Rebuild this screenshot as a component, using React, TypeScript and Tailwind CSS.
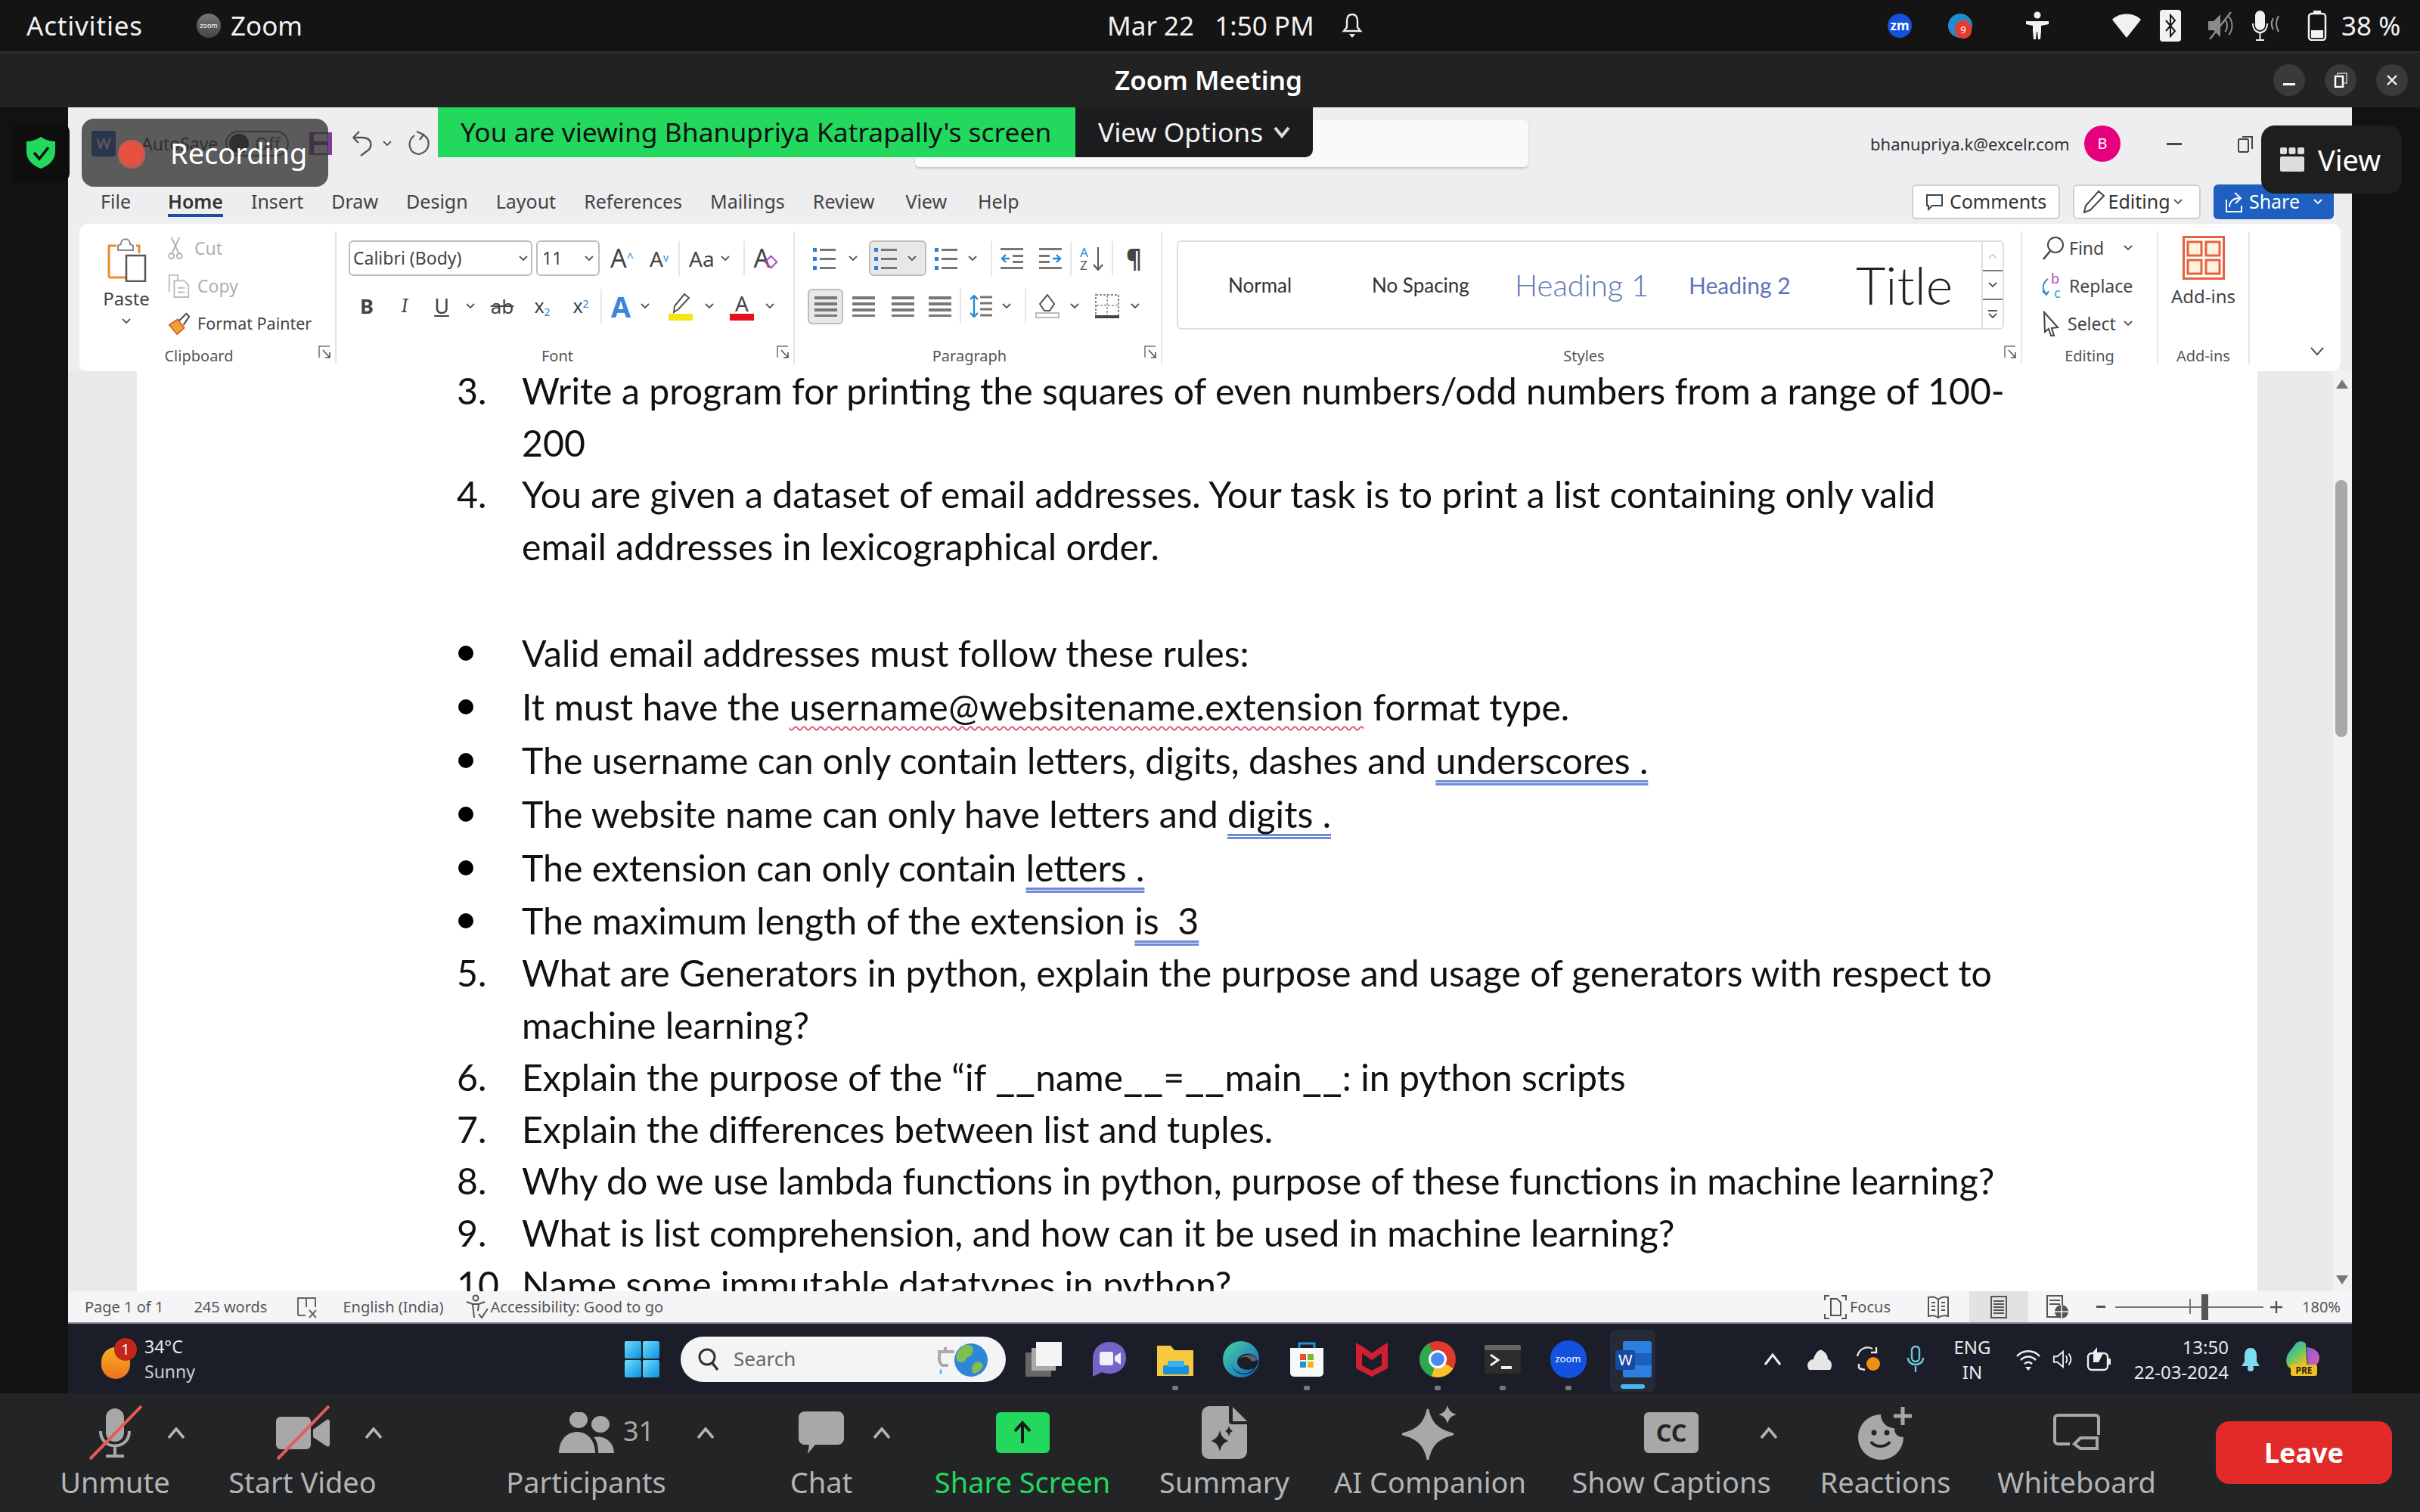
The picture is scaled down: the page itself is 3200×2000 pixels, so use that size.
import type { ReactNode } from "react";

const Chev = ({ color = "#555" }: { color?: string }) => (
  <svg width="12" height="8" viewBox="0 0 12 8" className="shrink-0">
    <path d="M1 1l5 5 5-5" stroke={color} strokeWidth="1.8" fill="none" />
  </svg>
);

const UpChev = () => (
  <svg width="24" height="15" viewBox="0 0 24 15">
    <path d="M2 14L12 2l10 12" stroke="#b5b5b5" strokeWidth="3.6" fill="none" />
  </svg>
);

const Launcher = () => (
  <svg width="17" height="20" viewBox="0 0 17 20" className="absolute right-[5px] bottom-[6px]">
    <path d="M1 17V2h14" stroke="#777" strokeWidth="1.6" fill="none" />
    <path d="M6 7l9 10M9 17h6v-7" stroke="#555" strokeWidth="1.6" fill="none" />
  </svg>
);

const Sep = () => <div className="w-[2px] h-[46px] bg-[#e6e6e6] shrink-0" />;

const Lines = () => (
  <svg width="30" height="28" viewBox="0 0 30 28" className="block">
    <rect y="1" width="30" height="4" fill="#777" />
    <rect y="9" width="30" height="4" fill="#777" />
    <rect y="17" width="30" height="4" fill="#777" />
    <rect y="25" width="30" height="3" fill="#777" />
  </svg>
);

const ListIcon = ({ marks }: { marks: string }) => (
  <svg width="32" height="30" viewBox="0 0 32 30" className="block shrink-0">
    <rect x="0" y="1" width="5" height="5" fill={marks} />
    <rect x="0" y="13" width="5" height="5" fill={marks} />
    <rect x="0" y="25" width="5" height="5" fill={marks} />
    <rect x="9" y="2" width="21" height="3" fill="#777" />
    <rect x="9" y="14" width="21" height="3" fill="#777" />
    <rect x="9" y="26" width="21" height="3" fill="#777" />
  </svg>
);

const IndentIcon = ({ flip }: { flip?: boolean }) => (
  <svg width="30" height="28" viewBox="0 0 30 28" className="block" style={flip ? { transform: "scaleX(-1)" } : undefined}>
    <rect width="30" height="3" y="0" fill="#777" />
    <rect width="30" height="3" y="25" fill="#777" />
    <rect x="16" width="14" height="3" y="9" fill="#777" />
    <rect x="16" width="14" height="3" y="17" fill="#777" />
    <path d="M12 14H2m5-5l-5 5 5 5" stroke="#2a8ad4" strokeWidth="2.4" fill="none" />
  </svg>
);

const Tray = ({ children, className }: { children: ReactNode; className: string }) => (
  <div className={`flex items-center justify-center shrink-0 ${className}`}>{children}</div>
);

const TopBar = () => (
  <div className="h-[70px] shrink-0 bg-[#141414] border-b-2 border-[#303030] flex items-center text-[#f2f2f2] text-[35px] relative">
    <span className="ml-[35px] w-[225px] tracking-[0.8px]">Activities</span>
    <div className="w-[32px] h-[32px] rounded-full bg-gradient-to-b from-[#777] to-[#444] flex items-center justify-center text-[9px] text-white">zoom</div>
    <span className="ml-[13px] w-[93px]">Zoom</span>
    <span className="ml-[1066px] w-[309px] whitespace-pre">Mar 22   1:50 PM</span>
    <svg width="30" height="34" viewBox="0 0 30 34">
      <path d="M15 2c-5 0-7 4-7 9v8l-4 5h22l-4-5v-8c0-5-2-9-7-9z" stroke="#eee" strokeWidth="2.4" fill="none" />
      <path d="M11 28h8l-4 5z" fill="#eee" />
    </svg>
    <div className="ml-[693px] w-[32px] h-[32px] rounded-full bg-[#1352e0] flex items-center justify-center text-[17px] font-bold text-white">zm</div>
    <div className="ml-[48px] w-[32px] h-[32px] rounded-full bg-[#1c8ed0] relative">
      <div className="absolute left-[9px] top-[9px] w-[22px] h-[24px] rounded-[10px] bg-[#e63c30] text-[13px] leading-[24px] text-center text-white">9</div>
    </div>
    <svg className="ml-[70px]" width="32" height="38" viewBox="0 0 32 38">
      <circle cx="16" cy="5" r="4.5" fill="#f2f2f2" />
      <path d="M1 13h30v4l-10 2v7l-1 11h-3l-1-10h-1l-1 10h-3l-1-11v-7L1 17z" fill="#f2f2f2" />
    </svg>
    <svg className="ml-[82px]" width="40" height="32" viewBox="0 0 40 32">
      <path d="M1 8C10-2 30-2 39 8L20 32z" fill="#f2f2f2" />
    </svg>
    <div className="ml-[24px] w-[28px] h-[42px] rounded-[4px] bg-[#f2f2f2] flex items-center justify-center">
      <svg width="16" height="32" viewBox="0 0 16 32">
        <path d="M2 9l12 14-6 7V2l6 7L2 23" stroke="#141414" strokeWidth="2" fill="none" />
      </svg>
    </div>
    <svg className="ml-[34px]" width="36" height="36" viewBox="0 0 36 36">
      <path d="M2 12h7l9-9v30l-9-9H2z" fill="#8a8a8a" />
      <path d="M24 10c4 4 4 12 0 16M29 6c6 6 6 18 0 24" stroke="#8a8a8a" strokeWidth="2" fill="none" />
      <path d="M4 36L32 0" stroke="#8a8a8a" strokeWidth="2.5" />
    </svg>
    <svg className="ml-[23px]" width="44" height="40" viewBox="0 0 44 40">
      <rect x="6" y="1" width="11" height="24" rx="5.5" stroke="#f2f2f2" strokeWidth="2" fill="#f2f2f2" />
      <path d="M2 17c0 16 19 16 19 0M11.5 29v9M6 39h11" stroke="#f2f2f2" strokeWidth="2" fill="none" />
      <path d="M29 10c-3 5-3 10 0 15M36 7c-4 7-4 14 0 21" stroke="#999" strokeWidth="2" fill="none" />
    </svg>
    <svg className="ml-[30px]" width="26" height="40" viewBox="0 0 26 40">
      <rect x="8" y="0" width="10" height="4" fill="#f2f2f2" />
      <rect x="2" y="4" width="22" height="35" rx="4" stroke="#f2f2f2" strokeWidth="2.5" fill="none" />
      <rect x="5" y="26" width="16" height="10" fill="#f2f2f2" />
    </svg>
    <span className="ml-[19px]">38 %</span>
  </div>
);

const TitleBar = () => (
  <div className="h-[72px] shrink-0 bg-[#222222] relative flex items-center justify-end pr-[16px] gap-[26px]">
    <span className="absolute left-[1474px] text-[35px] font-semibold text-white">Zoom Meeting</span>
    <Tray className="w-[42px] h-[42px] rounded-full bg-[#3a3a3a]">
      <div className="w-[16px] h-[3px] bg-white mt-[10px]" />
    </Tray>
    <Tray className="w-[42px] h-[42px] rounded-full bg-[#3a3a3a]">
      <svg width="18" height="20" viewBox="0 0 18 20">
        <path d="M5 3V1h12v13h-3" stroke="#ccc" strokeWidth="1.5" fill="none" />
        <rect x="2" y="5" width="10" height="14" stroke="#fff" strokeWidth="2.5" fill="none" />
      </svg>
    </Tray>
    <Tray className="w-[42px] h-[42px] rounded-full bg-[#3a3a3a]">
      <svg width="16" height="16" viewBox="0 0 16 16">
        <path d="M2 2l12 12M14 2L2 14" stroke="#fff" strokeWidth="2.2" />
      </svg>
    </Tray>
  </div>
);

const tabs = ["Insert", "Draw", "Design", "Layout", "References", "Mailings", "Review"];

const WordHeader = () => (
  <div className="h-[154px] shrink-0 bg-[#eeeef0] flex flex-col text-[#444]">
    <div className="h-[96px] flex items-center pl-[31px] whitespace-nowrap">
      <div className="w-[32px] h-[34px] bg-[#1b4fa8] text-white text-[20px] text-center leading-[34px] rounded-[3px]">W</div>
      <span className="ml-[34px] w-[97px] text-[23px] text-[#333]">AutoSave</span>
      <div className="ml-[14px] w-[84px] h-[34px] rounded-full border-2 border-[#555] flex items-center pl-[3px] text-[23px] text-[#555]">
        <div className="w-[26px] h-[26px] rounded-full bg-[#333] mr-[8px]" />
        Off
      </div>
      <svg className="ml-[26px]" width="32" height="32" viewBox="0 0 32 32">
        <rect x="1" y="1" width="30" height="30" fill="#7b3f98" />
        <rect x="7" y="3" width="18" height="10" fill="#eee" />
        <rect x="7" y="18" width="18" height="11" fill="#eee" />
      </svg>
      <svg className="ml-[23px]" width="32" height="34" viewBox="0 0 32 34">
        <path d="M4 9h12c14 0 14 14 6 18l-8 6M4 9l8-8M4 9l7 7" stroke="#555" strokeWidth="2.4" fill="none" />
      </svg>
      <div className="ml-[11px]">
        <Chev />
      </div>
      <svg className="ml-[19px]" width="33" height="34" viewBox="0 0 33 34">
        <path d="M22 5c11 5 11 22-5 26C4 30 0 15 11 6M14 1l9 4-5 7" stroke="#555" strokeWidth="2.2" fill="none" />
      </svg>
      <div className="ml-[640px] w-[811px] h-[62px] bg-[#fafafa] rounded-[6px] shadow-[0_2px_3px_#c4c4c4]" />
      <span className="ml-[452px] w-[265px] text-[22px] text-[#333]">bhanupriya.k@excelr.com</span>
      <div className="ml-[18px] w-[48px] h-[48px] rounded-full bg-[#e6007e] text-white text-[20px] flex items-center justify-center">B</div>
      <div className="ml-[61px] w-[20px] h-[3px] bg-[#444]" />
      <svg className="ml-[73px]" width="22" height="24" viewBox="0 0 22 24">
        <path d="M7 3h13v16" stroke="#444" strokeWidth="2" fill="none" />
        <rect x="2" y="6" width="13" height="17" rx="2" stroke="#444" strokeWidth="2" fill="none" />
      </svg>
    </div>
    <div className="h-[58px] flex items-center pl-[43px] gap-[37px] text-[25px] pr-[24px]">
      <span className="mr-[12px]">File</span>
      <span className="relative font-semibold text-[#333]">
        Home
        <span className="absolute left-0 right-0 top-[35px] h-[4px] bg-[#1a4fa8]" />
      </span>
      {tabs.map((t) => (
        <span key={t}>{t}</span>
      ))}
      <span className="ml-[4px]">View</span>
      <span className="ml-[4px]">Help</span>
      <div className="ml-auto flex items-center gap-[17px] text-[#333]">
        <div className="w-[196px] h-[46px] bg-white rounded-[6px] border-2 border-[#cfcfcf] flex items-center justify-center gap-[8px]">
          <svg width="24" height="24" viewBox="0 0 24 24">
            <path d="M2 3h20v14H9l-5 5v-5H2z" stroke="#444" strokeWidth="2" fill="none" />
          </svg>
          Comments
        </div>
        <div className="w-[169px] h-[46px] bg-white rounded-[6px] border-2 border-[#cfcfcf] flex items-center justify-center gap-[4px] pr-[12px]">
          <svg width="30" height="32" viewBox="0 0 30 32">
            <path d="M3 30l2-9L22 2l7 6-18 19z" stroke="#444" strokeWidth="2" fill="none" />
          </svg>
          Editing
          <Chev />
        </div>
        <div className="w-[159px] h-[46px] bg-[#1e5fbf] rounded-[6px] text-white flex items-center justify-center gap-[8px]">
          <svg width="24" height="30" viewBox="0 0 24 30">
            <path d="M2 12v16h20v-8M6 22c0-8 6-12 13-12M13 3l8 7-7 7" stroke="#fff" strokeWidth="2" fill="none" />
          </svg>
          Share
          <span className="ml-[10px]">
            <Chev color="#fff" />
          </span>
        </div>
      </div>
    </div>
  </div>
);

const Group = ({ label, className, labelClass = "", launcher = true, children }: { label: string; className: string; labelClass?: string; launcher?: boolean; children: ReactNode }) => (
  <div className={`relative shrink-0 h-[176px] flex flex-col border-r-2 border-[#e6e6e6] ${className}`}>
    <div className="flex-1 min-h-0">{children}</div>
    <div className={`h-[22px] text-[20px] leading-[22px] text-center text-[#555] ${labelClass}`}>{label}</div>
    {launcher && <Launcher />}
  </div>
);

const Clipboard = () => (
  <Group label="Clipboard" className="w-[340px]" labelClass="pr-[22px]">
    <div className="flex pl-[27px]">
      <div className="w-[70px] mt-[7px] flex flex-col items-center">
        <svg width="54" height="60" viewBox="0 0 54 60">
          <path d="M4 54V12h10M40 12h4v10" stroke="#ea8c2c" strokeWidth="3" fill="none" />
          <path d="M16 12l4-2c0-9 12-9 12 0l4 2v6H16z" stroke="#888" strokeWidth="2" fill="#fff" />
          <path d="M4 54h22" stroke="#ea8c2c" strokeWidth="3" />
          <rect x="27" y="25" width="25" height="34" stroke="#555" strokeWidth="2.5" fill="#fff" />
        </svg>
        <span className="text-[24px] mt-[6px] leading-[32px] text-[#444]">Paste</span>
        <div className="mt-[10px]">
          <Chev />
        </div>
      </div>
      <div className="ml-[19px] -mt-[3px] flex flex-col text-[23px]">
        <div className="h-[50px] flex items-center gap-[14px] text-[#b0b0b0]">
          <svg width="22" height="30" viewBox="0 0 22 34">
            <path d="M5 1l11 24M17 1L6 25" stroke="#aaa" strokeWidth="2" fill="none" />
            <circle cx="5" cy="29" r="4" stroke="#aaa" strokeWidth="2" fill="none" />
            <circle cx="17" cy="29" r="4" stroke="#aaa" strokeWidth="2" fill="none" />
          </svg>
          Cut
        </div>
        <div className="h-[50px] flex items-center gap-[8px] text-[#b0b0b0]">
          <svg width="32" height="32" viewBox="0 0 32 34">
            <path d="M2 26V2h12v8" stroke="#bbb" strokeWidth="2" fill="none" />
            <path d="M9 10h14l6 6v17H9z" stroke="#bbb" strokeWidth="2" fill="none" />
            <path d="M14 20h10M14 26h10" stroke="#bbb" strokeWidth="2" />
          </svg>
          Copy
        </div>
        <div className="h-[50px] flex items-center gap-[8px] text-[#444] text-[21.5px] whitespace-nowrap">
          <svg width="32" height="30" viewBox="0 0 32 32">
            <path d="M2 18l12-8 9 12-10 9z" fill="#f0a33a" stroke="#d9622a" strokeWidth="2" />
            <path d="M16 12l10-10 4 4-8 12" fill="#fff" stroke="#444" strokeWidth="2" />
          </svg>
          Format Painter
        </div>
      </div>
    </div>
  </Group>
);

const FontGroup = () => (
  <Group label="Font" className="w-[606px]" labelClass="pr-[20px]">
    <div className="pl-[16px] pt-[12px] h-[59px] flex items-center text-[#444]">
      <div className="w-[243px] h-[47px] border-2 border-[#bdbdbd] rounded-[6px] flex items-center justify-between px-[4px] text-[23px]">
        Calibri (Body)
        <Chev />
      </div>
      <div className="ml-[5px] w-[84px] h-[47px] border-2 border-[#bdbdbd] rounded-[6px] flex items-center justify-between px-[6px] text-[23px]">
        11
        <Chev />
      </div>
      <span className="ml-[14px] w-[52px] text-[34px]">
        A<sup className="text-[16px] text-[#2a8ad4]">^</sup>
      </span>
      <span className="w-[38px] text-[28px]">
        A<sup className="text-[14px] text-[#2a8ad4]">v</sup>
      </span>
      <Sep />
      <span className="ml-[12px] text-[28px]">Aa</span>
      <span className="ml-[8px]">
        <Chev />
      </span>
      <div className="ml-[18px] w-[2px] h-[46px] bg-[#e6e6e6]" />
      <span className="ml-[12px] relative text-[34px]">
        A
        <span className="absolute left-[16px] top-[24px] w-[13px] h-[13px] rotate-45 border-2 border-[#b04ac0]" />
      </span>
    </div>
    <div className="pl-[15px] pt-[17px] flex items-center h-[63px] text-[#444] text-center">
      <span className="w-[50px] text-[27px] font-bold">B</span>
      <span className="w-[50px] text-[27px] italic font-serif">I</span>
      <span className="w-[48px] text-[27px] underline">U</span>
      <span className="w-[28px] flex justify-center">
        <Chev />
      </span>
      <span className="w-[56px] text-[26px] line-through">ab</span>
      <span className="w-[50px] text-[25px]">
        x<sub className="text-[14px] text-[#2a8ad4]">2</sub>
      </span>
      <span className="w-[52px] text-[25px]">
        x<sup className="text-[14px] text-[#2a8ad4]">2</sup>
      </span>
      <Sep />
      <span className="w-[50px] text-[38px] font-bold text-[#3d86d8]">A</span>
      <span className="w-[14px] flex justify-center">
        <Chev />
      </span>
      <div className="ml-[18px] w-[44px] flex flex-col items-center">
        <svg width="26" height="28" viewBox="0 0 26 28">
          <path d="M4 26l1-8L18 2l6 5-14 15z" stroke="#555" strokeWidth="2" fill="none" />
        </svg>
        <div className="w-[32px] h-[9px] bg-[#f4e414]" />
      </div>
      <span className="w-[32px] flex justify-center">
        <Chev />
      </span>
      <div className="ml-[6px] w-[42px] flex flex-col items-center">
        <span className="text-[28px] leading-[28px]">A</span>
        <div className="w-[32px] h-[9px] bg-[#e8101c]" />
      </div>
      <span className="w-[32px] flex justify-center">
        <Chev />
      </span>
    </div>
  </Group>
);

const ParagraphGroup = () => (
  <Group label="Paragraph" className="w-[486px]" labelClass="pr-[22px]">
    <div className="pl-[24px] pt-[12px] h-[59px] flex items-center">
      <ListIcon marks="#2a7fd4" />
      <span className="ml-[15px]">
        <Chev />
      </span>
      <div className="ml-[15px] w-[76px] h-[47px] border-2 border-[#bdbdbd] rounded-[6px] bg-[#e8e8e8] flex items-center pl-[5px] gap-[12px]">
        <ListIcon marks="#2a7fd4" />
        <Chev />
      </div>
      <span className="ml-[11px]">
        <ListIcon marks="#2a7fd4" />
      </span>
      <span className="ml-[12px]">
        <Chev />
      </span>
      <div className="ml-[18px]">
        <Sep />
      </div>
      <span className="ml-[11px]">
        <IndentIcon />
      </span>
      <span className="ml-[21px]">
        <IndentIcon flip />
      </span>
      <div className="ml-[11px]">
        <Sep />
      </div>
      <svg className="ml-[10px]" width="34" height="34" viewBox="0 0 34 34">
        <text x="1" y="15" fontSize="17" fill="#2a8ad4" fontFamily="Noto Sans">A</text>
        <text x="1" y="32" fontSize="17" fill="#555" fontFamily="Noto Sans">Z</text>
        <path d="M25 2v30m-6-7l6 7 6-7" stroke="#555" strokeWidth="2" fill="none" />
      </svg>
      <div className="ml-[9px]">
        <Sep />
      </div>
      <span className="ml-[17px] text-[32px] font-bold text-[#444] leading-[40px]">¶</span>
    </div>
    <div className="pl-[17px] pt-[17px] h-[63px] flex items-center">
      <div className="w-[47px] h-[47px] border-2 border-[#bdbdbd] rounded-[6px] bg-[#e8e8e8] flex items-center justify-center">
        <Lines />
      </div>
      <span className="ml-[12px]">
        <Lines />
      </span>
      <span className="ml-[22px]">
        <Lines />
      </span>
      <span className="ml-[19px]">
        <Lines />
      </span>
      <div className="ml-[11px]">
        <Sep />
      </div>
      <svg className="ml-[11px]" width="32" height="30" viewBox="0 0 32 30">
        <path d="M6 1v28M1 6l5-5 5 5M1 24l5 5 5-5" stroke="#2a8ad4" strokeWidth="2.4" fill="none" />
        <path d="M14 3h16M14 11h16M14 19h16M14 27h16" stroke="#777" strokeWidth="3" />
      </svg>
      <span className="ml-[11px]">
        <Chev />
      </span>
      <div className="ml-[18px]">
        <Sep />
      </div>
      <svg className="ml-[12px]" width="32" height="32" viewBox="0 0 32 32">
        <path d="M16 1l9 12-6 9h-7l-6-9z" stroke="#555" strokeWidth="2" fill="none" />
        <rect x="1" y="25" width="30" height="6" stroke="#bbb" strokeWidth="2" fill="#fff" />
      </svg>
      <span className="ml-[14px]">
        <Chev />
      </span>
      <svg className="ml-[21px]" width="32" height="32" viewBox="0 0 32 32">
        <rect x="1" y="1" width="30" height="28" stroke="#888" strokeWidth="2" strokeDasharray="3 2" fill="none" />
        <path d="M16 2v26M2 15h28" stroke="#aaa" strokeWidth="2" strokeDasharray="3 2" />
        <rect y="28" width="32" height="4" fill="#444" />
      </svg>
      <span className="ml-[15px]">
        <Chev />
      </span>
    </div>
  </Group>
);

const StylesGroup = () => (
  <Group label="Styles" className="w-[1137px]" labelClass="pr-[20px]">
    <div className="ml-[19px] mt-[12px] w-[1094px] h-[118px] border-2 border-[#dedede] rounded-[6px] flex items-center relative font-['Lato'] text-[#333]">
      <span className="absolute left-[66px] text-[26px]">Normal</span>
      <span className="absolute left-[256px] text-[26px]">No Spacing</span>
      <span className="absolute left-[445px] text-[40px] font-light text-[#5f74b6]">Heading 1</span>
      <span className="absolute left-[675px] text-[30px] text-[#5f74b6]">Heading 2</span>
      <span className="absolute left-[896px] -top-[2px] leading-[118px] text-[68px] font-light text-[#222]">Title</span>
      <div className="ml-auto w-[28px] h-full border-l-2 border-[#dedede] flex flex-col">
        <div className="flex-1 flex items-center justify-center rotate-180">
          <Chev color="#ccc" />
        </div>
        <div className="flex-1 flex items-center justify-center border-y-2 border-[#777]">
          <Chev />
        </div>
        <div className="flex-1 flex flex-col items-center justify-center gap-[2px]">
          <div className="w-[12px] h-[2px] bg-[#555]" />
          <Chev />
        </div>
      </div>
    </div>
  </Group>
);

const EditingGroup = () => (
  <Group label="Editing" className="w-[180px]" launcher={false}>
    <div className="flex flex-col text-[23px] text-[#444] pl-[26px] -mt-[3px]">
      <div className="h-[50px] flex items-center gap-[6px]">
        <svg width="30" height="32" viewBox="0 0 30 32">
          <circle cx="18" cy="12" r="10" stroke="#444" strokeWidth="2" fill="none" />
          <path d="M11 20L2 31" stroke="#444" strokeWidth="2.5" />
        </svg>
        Find
        <span className="ml-[20px]">
          <Chev />
        </span>
      </div>
      <div className="h-[50px] flex items-center gap-[6px] -ml-[2px]">
        <svg width="32" height="34" viewBox="0 0 32 34">
          <text x="14" y="14" fontSize="18" fill="#b04ac0" fontFamily="Noto Sans">b</text>
          <text x="18" y="33" fontSize="18" fill="#2aa6c8" fontFamily="Noto Sans">c</text>
          <path d="M10 8C2 14 2 22 8 28m-5-4l5 5 3-5" stroke="#2a8ad4" strokeWidth="2" fill="none" />
        </svg>
        Replace
      </div>
      <div className="h-[50px] flex items-center gap-[10px]">
        <svg width="24" height="34" viewBox="0 0 24 34">
          <path d="M3 2l18 20-8 1 3 10-4 0-3-9-5 4z" stroke="#444" strokeWidth="2" fill="none" />
        </svg>
        Select
        <Chev />
      </div>
    </div>
  </Group>
);

const AddinsGroup = () => (
  <div className="relative shrink-0 h-[176px] w-[121px] flex flex-col items-center border-r-2 border-[#e6e6e6] text-[#444]">
    <svg className="mt-[6px]" width="56" height="58" viewBox="0 0 56 58">
      <rect x="1.5" y="1.5" width="53" height="55" stroke="#e8603c" strokeWidth="3" fill="none" />
      <rect x="7" y="8" width="18" height="18" stroke="#e8603c" strokeWidth="3" fill="#fff3df" />
      <rect x="31" y="8" width="18" height="18" stroke="#e8603c" strokeWidth="3" fill="#fff3df" />
      <rect x="7" y="32" width="18" height="18" stroke="#e8603c" strokeWidth="3" fill="#fff3df" />
      <rect x="31" y="32" width="18" height="18" stroke="#e8603c" strokeWidth="3" fill="#fff3df" />
    </svg>
    <span className="mt-[6px] text-[24px] leading-[32px]">Add-ins</span>
    <span className="mt-auto text-[20px] leading-[22px] text-[#555]">Add-ins</span>
  </div>
);

const Ribbon = () => (
  <div className="h-[195px] shrink-0 bg-[#eeeef0] pl-[15px] pr-[15px]">
    <div className="h-full bg-white rounded-[12px] py-[10px] flex relative">
      <Clipboard />
      <FontGroup />
      <ParagraphGroup />
      <StylesGroup />
      <EditingGroup />
      <AddinsGroup />
      <svg className="absolute right-[22px] bottom-[20px]" width="18" height="12" viewBox="0 0 18 12">
        <path d="M1 1l8 9 8-9" stroke="#555" strokeWidth="2" fill="none" />
      </svg>
    </div>
  </div>
);

const wavy = "underline decoration-wavy decoration-[#e0506a] decoration-2 underline-offset-[7px] [text-decoration-skip-ink:none] tracking-[0.5px]";
const dbl = "underline decoration-double decoration-[#6f8ad8] decoration-[3px] underline-offset-[8px] [text-decoration-skip-ink:none]";
const unders = "text-[58px] leading-[0]";

const docRows: { mark?: string; bullet?: boolean; h: string; body?: ReactNode }[] = [
  { mark: "3.", h: "h-[69px]", body: "Write a program for printing the squares of even numbers/odd numbers from a range of 100-" },
  { h: "h-[68px]", body: "200" },
  { mark: "4.", h: "h-[69px]", body: "You are given a dataset of email addresses. Your task is to print a list containing only valid" },
  { h: "h-[69px]", body: "email addresses in lexicographical order." },
  { h: "h-[71px]" },
  { bullet: true, h: "h-[71px]", body: "Valid email addresses must follow these rules:" },
  { bullet: true, h: "h-[71px]", body: <>It must have the <span className={wavy}>username@websitename.extension</span> format type.</> },
  { bullet: true, h: "h-[71px]", body: <>The username can only contain letters, digits, dashes and <span className={dbl}>underscores .</span></> },
  { bullet: true, h: "h-[71px]", body: <>The website name can only have letters and <span className={dbl}>digits .</span></> },
  { bullet: true, h: "h-[71px]", body: <>The extension can only contain <span className={dbl}>letters .</span></> },
  { bullet: true, h: "h-[69px]", body: <>The maximum length of the extension <span className={dbl}>is  3</span></> },
  { mark: "5.", h: "h-[69px]", body: "What are Generators in python, explain the purpose and usage of generators with respect to" },
  { h: "h-[69px]", body: "machine learning?" },
  { mark: "6.", h: "h-[69px]", body: <>Explain the purpose of the “if <span className={unders}>__</span>name<span className={unders}>__</span>=<span className={unders}>__</span>main<span className={unders}>__</span>: in python scripts</> },
  { mark: "7.", h: "h-[68px]", body: "Explain the differences between list and tuples." },
  { mark: "8.", h: "h-[69px]", body: "Why do we use lambda functions in python, purpose of these functions in machine learning?" },
  { mark: "9.", h: "h-[68px]", body: "What is list comprehension, and how can it be used in machine learning?" },
  { mark: "10.", h: "h-[68px]", body: "Name some immutable datatypes in python?" },
];

const Doc = () => (
  <div className="h-[1217px] shrink-0 flex bg-[#e9e9eb]">
    <div className="w-[91px] shrink-0" />
    <div className="w-[2804px] shrink-0 bg-white overflow-hidden font-['Lato'] text-[48.2px] text-[#111]">
      <div className="-mt-[9px]">
        {docRows.map((r, i) => (
          <div key={i} className={`flex items-center whitespace-pre ${r.h}`}>
            <div className="w-[509px] shrink-0 pl-[423px]">
              {r.mark}
              {r.bullet && <div className="ml-[2px] w-[20px] h-[20px] rounded-full bg-black" />}
            </div>
            <div>{r.body}</div>
          </div>
        ))}
      </div>
    </div>
    <div className="w-[100px] shrink-0" />
    <div className="w-[25px] shrink-0 bg-[#f2f2f4] relative">
      <svg className="absolute left-[3px] top-[10px]" width="18" height="14" viewBox="0 0 18 14">
        <path d="M9 1l8 12H1z" fill="#777" />
      </svg>
      <div className="absolute left-[3px] top-[144px] w-[16px] h-[340px] rounded-full bg-[#a8a8a8]" />
      <svg className="absolute left-[3px] bottom-[8px]" width="18" height="14" viewBox="0 0 18 14">
        <path d="M9 13l8-12H1z" fill="#777" />
      </svg>
    </div>
  </div>
);

const StatusBar = () => (
  <div className="h-[43px] shrink-0 bg-[#f5f5f7] border-b-2 border-[#8a8a8a] flex items-center text-[20px] text-[#555] pl-[22px] whitespace-nowrap">
    <span>Page 1 of 1</span>
    <span className="ml-[40px]">245 words</span>
    <svg className="ml-[38px]" width="30" height="30" viewBox="0 0 30 30">
      <path d="M3 26V3h11v12M14 3h12v12M3 26h10M18 19l9 10M27 19l-9 10" stroke="#666" strokeWidth="2" fill="none" />
    </svg>
    <span className="ml-[32px]">English (India)</span>
    <svg className="ml-[28px]" width="32" height="34" viewBox="0 0 32 34">
      <circle cx="14" cy="5" r="3.5" stroke="#555" strokeWidth="2" fill="none" />
      <path d="M2 10l8 3h8l8-3M10 13l2 18M18 13l-1 9M18 26l4 5 8-12" stroke="#555" strokeWidth="2" fill="none" />
    </svg>
    <span className="ml-[2px]">Accessibility: Good to go</span>
    <div className="ml-auto flex items-center h-full pr-[18px]">
      <svg width="30" height="32" viewBox="0 0 30 32">
        <path d="M1 7V1h6M23 1h6v6M29 25v6h-6M7 31H1v-6" stroke="#555" strokeWidth="2" fill="none" />
        <path d="M9 5h8l5 5v17H9z" stroke="#555" strokeWidth="2" fill="none" />
      </svg>
      <span className="ml-[4px]">Focus</span>
      <svg className="ml-[49px]" width="28" height="30" viewBox="0 0 28 30">
        <path d="M14 5C10 1 5 1 1 2v25c4-1 9-1 13 2 4-3 9-3 13-2V2c-4-1-9-1-13 3zM14 5v24" stroke="#555" strokeWidth="2" fill="none" />
        <path d="M5 9h5M5 14h5M5 19h5M18 9h5M18 14h5M18 19h5" stroke="#555" strokeWidth="2" />
      </svg>
      <div className="ml-[27px] w-[78px] h-full bg-[#e2e2e4] flex items-center justify-center">
        <svg width="22" height="30" viewBox="0 0 22 30">
          <rect x="1" y="1" width="20" height="28" stroke="#555" strokeWidth="2" fill="none" />
          <path d="M4 7h14M4 11h14M4 15h14M4 19h14M4 23h14" stroke="#555" strokeWidth="2" />
        </svg>
      </div>
      <svg className="ml-[24px]" width="30" height="32" viewBox="0 0 30 32">
        <rect x="1" y="1" width="20" height="28" stroke="#555" strokeWidth="2" fill="none" />
        <path d="M4 7h14M4 12h14" stroke="#555" strokeWidth="2" />
        <circle cx="20" cy="22" r="9" fill="#555" />
        <path d="M11 22h18M20 13v18" stroke="#f5f5f7" strokeWidth="1.5" />
      </svg>
      <div className="ml-[36px] w-[12px] h-[3px] bg-[#555]" />
      <div className="ml-[13px] w-[196px] h-[2px] bg-[#777] relative">
        <div className="absolute left-[98px] -top-[10px] w-[2px] h-[20px] bg-[#777]" />
        <div className="absolute left-[114px] -top-[16px] w-[9px] h-[34px] bg-[#555]" />
      </div>
      <svg className="ml-[9px]" width="16" height="16" viewBox="0 0 16 16">
        <path d="M8 0v16M0 8h16" stroke="#555" strokeWidth="2.4" />
      </svg>
      <span className="ml-[26px] w-[48px]">180%</span>
    </div>
  </div>
);

const taskDot = "absolute bottom-[5px] left-1/2 -translate-x-1/2 w-[8px] h-[6px] rounded-[2px] bg-[#777]";

const Taskbar = () => (
  <div className="h-[93px] shrink-0 bg-[#1b1e28] flex items-center text-[#e8e8e8] whitespace-nowrap">
    <div className="w-[736px] shrink-0 flex items-center pl-[44px]">
      <div className="relative w-[44px] h-[60px]">
        <div className="absolute left-0 top-[14px] w-[38px] h-[42px] rounded-full bg-gradient-to-b from-[#f0b020] to-[#f07020]" />
        <div className="absolute left-[17px] top-[2px] w-[30px] h-[30px] rounded-full bg-[#c4261c] text-[20px] leading-[30px] text-center text-white">1</div>
      </div>
      <div className="ml-[13px] flex flex-col text-[23px] leading-[33px]">
        <span>34°C</span>
        <span className="text-[#ccc]">Sunny</span>
      </div>
    </div>
    <svg width="46" height="48" viewBox="0 0 46 48" className="shrink-0">
      <defs>
        <linearGradient id="win" x1="0" y1="0" x2="1" y2="1">
          <stop offset="0" stopColor="#6fe0fa" />
          <stop offset="1" stopColor="#0a8ee0" />
        </linearGradient>
      </defs>
      <rect width="22" height="23" rx="2" fill="url(#win)" />
      <rect x="24" width="22" height="23" rx="2" fill="url(#win)" />
      <rect y="25" width="22" height="23" rx="2" fill="url(#win)" />
      <rect x="24" y="25" width="22" height="23" rx="2" fill="url(#win)" />
    </svg>
    <div className="ml-[28px] w-[430px] h-[60px] shrink-0 rounded-full bg-[#f4f4f6] flex items-center pl-[22px] text-[#666] text-[26px] relative">
      <svg width="30" height="32" viewBox="0 0 30 32">
        <circle cx="13" cy="13" r="10" stroke="#333" strokeWidth="3" fill="none" />
        <path d="M20 21l7 9" stroke="#333" strokeWidth="3.5" />
      </svg>
      <span className="ml-[18px]">Search</span>
      <svg className="absolute right-[18px] top-[8px]" width="74" height="46" viewBox="0 0 74 46">
        <path d="M2 12h22M12 6v6M5 12c-2 8-2 14 3 18h8" stroke="#aaa" strokeWidth="4" fill="none" />
        <path d="M6 34c-2 4-2 6 0 8 2-2 2-4 0-8z" fill="#60b0e8" />
        <circle cx="46" cy="23" r="22" fill="#2f86d8" />
        <path d="M36 4c-8 6-12 14-8 20 6 4 10 2 12-4 6-2 10-6 8-14-4-4-8-4-12-2zM52 26c-4 2-6 8-4 14 6 2 12-4 14-10-2-4-6-6-10-4z" fill="#7fbe50" />
      </svg>
    </div>
    <div className="ml-[7px] flex shrink-0">
      <Tray className="w-[86px] h-[93px]">
        <svg width="48" height="46" viewBox="0 0 48 46">
          <rect x="0" y="14" width="34" height="32" fill="#666" />
          <rect x="8" y="8" width="32" height="30" fill="#aaa" />
          <rect x="14" y="0" width="34" height="32" fill="#f4f4f4" />
        </svg>
      </Tray>
      <Tray className="w-[87px] h-[93px]">
        <svg width="46" height="48" viewBox="0 0 46 48">
          <path d="M23 1C10 1 1 11 1 23v24l12-6c3 1 6 2 10 2 13 0 22-9 22-21S36 1 23 1z" fill="#7464c8" />
          <rect x="10" y="14" width="18" height="18" rx="3" fill="#f0f0f8" />
          <path d="M30 20l8-5v16l-8-5z" fill="#f0f0f8" />
        </svg>
      </Tray>
      <Tray className="w-[87px] h-[93px] relative">
        <svg width="48" height="44" viewBox="0 0 48 44">
          <path d="M0 4h18l5 6h25v34H0z" fill="#f7c93e" />
          <rect x="8" y="30" width="34" height="12" rx="2" fill="#1890e0" />
          <rect x="14" y="24" width="22" height="8" rx="2" fill="#3ab0f0" />
        </svg>
        <div className={taskDot} />
      </Tray>
      <Tray className="w-[87px] h-[93px]">
        <svg width="48" height="50" viewBox="0 0 48 50">
          <defs>
            <linearGradient id="edge" x1="0" y1="0" x2="1" y2="1">
              <stop offset="0" stopColor="#4cd4a0" />
              <stop offset="1" stopColor="#0a60c8" />
            </linearGradient>
          </defs>
          <circle cx="24" cy="25" r="24" fill="url(#edge)" />
          <path d="M47 28c-3-14-26-14-28 0 0 10 14 14 22 8-6 12-26 10-30-6 4 20 30 20 36-2z" fill="#1b1e28" />
          <path d="M46 26c-4-8-18-10-24-2 6-4 14-2 16 4z" fill="#fff" opacity="0.3" />
        </svg>
      </Tray>
      <Tray className="w-[87px] h-[93px] relative">
        <svg width="46" height="48" viewBox="0 0 46 48">
          <path d="M13 10V3h20v7" stroke="#1a96d8" strokeWidth="3" fill="none" />
          <path d="M1 9h44v33a5 5 0 0 1-5 5H6a5 5 0 0 1-5-5z" fill="#f8f8f8" />
          <rect x="14" y="17" width="8" height="8" fill="#e8502c" />
          <rect x="24" y="17" width="8" height="8" fill="#7cb82c" />
          <rect x="14" y="27" width="8" height="8" fill="#1a96d8" />
          <rect x="24" y="27" width="8" height="8" fill="#f7b81c" />
        </svg>
        <div className={taskDot} />
      </Tray>
      <Tray className="w-[86px] h-[93px]">
        <svg width="44" height="48" viewBox="0 0 44 48">
          <path d="M1 2l10 6 11 8 11-8 10-6v34L22 47 1 36zM9 16v16l13 7 13-7V16l-13 9z" fill="#d02030" fillRule="evenodd" />
        </svg>
      </Tray>
      <Tray className="w-[87px] h-[93px] relative">
        <div className="w-[48px] h-[48px] rounded-full bg-[conic-gradient(#e0392c_0deg_120deg,#f7c12c_120deg_200deg,#2fa84c_200deg_330deg,#e0392c_330deg_360deg)] flex items-center justify-center">
          <div className="w-[24px] h-[24px] rounded-full bg-[#4a8af0] border-[3px] border-white" />
        </div>
        <div className={taskDot} />
      </Tray>
      <Tray className="w-[86px] h-[93px] relative">
        <svg width="48" height="38" viewBox="0 0 48 38">
          <rect width="48" height="38" rx="3" fill="#2c2c2c" />
          <rect width="48" height="7" rx="2" fill="#666" />
          <path d="M8 13l10 7-10 7" stroke="#eee" strokeWidth="3" fill="none" />
          <rect x="22" y="28" width="14" height="4" fill="#eee" />
        </svg>
        <div className={taskDot} />
      </Tray>
      <Tray className="w-[87px] h-[93px] relative">
        <div className="w-[48px] h-[50px] rounded-full bg-[#1352e0] text-white text-[13px] flex items-center justify-center">zoom</div>
        <div className={taskDot} />
      </Tray>
      <Tray className="w-[85px] h-[93px] relative">
        <div className="absolute left-[12px] top-[8px] w-[60px] h-[82px] rounded-[8px] bg-[#252a36]" />
        <svg className="relative" width="48" height="48" viewBox="0 0 48 48">
          <rect x="10" y="0" width="38" height="48" rx="3" fill="#2a7fe0" />
          <rect x="10" y="16" width="38" height="16" fill="#1a5fc0" />
          <rect x="0" y="12" width="26" height="26" rx="3" fill="#144aa0" />
          <text x="4" y="32" fontSize="20" fill="#fff" fontFamily="Noto Sans">W</text>
        </svg>
        <div className="absolute bottom-[7px] left-[26px] w-[32px] h-[6px] rounded-[3px] bg-[#4ab8f0]" />
      </Tray>
    </div>
    <Tray className="ml-[122px] w-[40px] h-[40px]">
      <svg width="24" height="18" viewBox="0 0 24 18">
        <path d="M2 16L12 3l10 13" stroke="#eee" strokeWidth="3" fill="none" />
      </svg>
    </Tray>
    <Tray className="w-[84px] h-[40px]">
      <svg width="34" height="28" viewBox="0 0 34 28">
        <path d="M3 28C-2 20 4 14 9 14 11 6 17 0 20 2c4 2 8 6 8 12 6 2 6 10 3 14z" fill="#e6e6e6" />
      </svg>
    </Tray>
    <Tray className="w-[44px] h-[40px]">
      <svg width="36" height="36" viewBox="0 0 36 36">
        <path d="M4 14C6 4 16 0 24 4m5-2v7h-7M14 32l-8-2M6 24v6" stroke="#e6e6e6" strokeWidth="2.4" fill="none" />
        <circle cx="25" cy="24" r="9" fill="#f09010" />
      </svg>
    </Tray>
    <Tray className="w-[82px] h-[40px]">
      <svg width="24" height="36" viewBox="0 0 24 36">
        <rect x="7" y="1" width="10" height="20" rx="5" stroke="#6ec8d8" strokeWidth="2.4" fill="none" />
        <path d="M2 16c0 12 20 12 20 0M12 27v8" stroke="#6ec8d8" strokeWidth="2.4" fill="none" />
      </svg>
    </Tray>
    <div className="w-[68px] text-center text-[24px] leading-[33px]">
      ENG
      <br />
      IN
    </div>
    <Tray className="ml-[8px] w-[64px] h-[40px]">
      <svg width="34" height="30" viewBox="0 0 34 30">
        <path d="M2 11c8-9 22-9 30 0M7 16c6-6 14-6 20 0M12 21c3-3 7-3 10 0" stroke="#eee" strokeWidth="2.6" fill="none" />
        <path d="M17 30l-4-5h8z" fill="#eee" />
      </svg>
    </Tray>
    <Tray className="w-[28px] h-[40px]">
      <svg width="30" height="30" viewBox="0 0 30 30">
        <path d="M2 11h5l8-7v22l-8-7H2z" stroke="#eee" strokeWidth="2" fill="none" />
        <path d="M19 10c2 3 2 7 0 10M23 7c4 5 4 11 0 16" stroke="#eee" strokeWidth="2" fill="none" />
      </svg>
    </Tray>
    <Tray className="w-[68px] h-[40px]">
      <svg width="34" height="36" viewBox="0 0 34 36">
        <rect x="2" y="10" width="26" height="22" rx="5" stroke="#eee" strokeWidth="2.4" fill="none" />
        <path d="M9 8l5-6v8h8l-6 12h-7z" fill="#eee" />
        <rect x="29" y="17" width="3" height="8" fill="#eee" />
      </svg>
    </Tray>
    <div className="w-[137px] text-right text-[24px] leading-[33px]">
      13:50
      <br />
      22-03-2024
    </div>
    <Tray className="w-[58px] h-[40px]">
      <svg width="26" height="32" viewBox="0 0 26 32">
        <path d="M13 1c-6 0-8 5-8 10v8l-4 6h24l-4-6v-8c0-5-2-10-8-10z" fill="#7edcf0" />
        <circle cx="13" cy="28" r="4" fill="#7edcf0" />
      </svg>
    </Tray>
    <Tray className="w-[82px] h-[60px] relative">
      <svg className="-mt-[10px]" width="46" height="38" viewBox="0 0 46 38">
        <defs>
          <linearGradient id="cop" x1="0" y1="0" x2="0.6" y2="1">
            <stop offset="0" stopColor="#2a9ee8" />
            <stop offset="0.55" stopColor="#5cc86a" />
            <stop offset="1" stopColor="#f0c020" />
          </linearGradient>
          <linearGradient id="cop2" x1="0" y1="0" x2="1" y2="1">
            <stop offset="0" stopColor="#8a60e0" />
            <stop offset="1" stopColor="#e05ab0" />
          </linearGradient>
        </defs>
        <path d="M12 4c3-5 12-5 14 0l2 32H8C0 36-2 24 3 16z" fill="url(#cop)" />
        <path d="M27 8c10 1 17 6 17 14 0 7-6 14-15 14z" fill="url(#cop2)" />
      </svg>
      <div className="absolute left-[24px] top-[37px] w-[35px] h-[15px] rounded-[3px] bg-[#f0c020] text-[12px] font-bold leading-[15px] text-center text-[#222]">PRE</div>
    </Tray>
  </div>
);

const ToolItem = ({ className, label, labelClass = "text-[#b4b4b4]", icon, up, upClass }: { className: string; label: string; labelClass?: string; icon: ReactNode; up?: boolean; upClass?: string }) => (
  <div className={`relative shrink-0 flex flex-col items-center ${className}`}>
    <div className="h-[82px] flex items-center justify-center">{icon}</div>
    <span className={`whitespace-nowrap text-[38px] leading-[48px] ${labelClass}`}>{label}</span>
    {up && (
      <div className={`absolute top-[34px] ${upClass}`}>
        <UpChev />
      </div>
    )}
  </div>
);

const BottomBar = () => (
  <div className="h-[157px] shrink-0 bg-[#232426] flex pl-[52px] pt-[11px]">
    <ToolItem
      className="w-[200px]"
      label="Unmute"
      up
      upClass="left-[169px]"
      icon={
        <svg width="72" height="72" viewBox="0 0 72 72">
          <rect x="24" y="4" width="24" height="44" rx="12" fill="#a8a8a8" />
          <path d="M17 34c0 26 38 26 38 0M36 52v13M24 67h24" stroke="#a8a8a8" strokeWidth="4" fill="none" />
          <path d="M3 71L71 1" stroke="#e85a5a" strokeWidth="4" />
        </svg>
      }
    />
    <ToolItem
      className="ml-[28px] w-[240px]"
      label="Start Video"
      up
      upClass="left-[202px]"
      icon={
        <svg width="72" height="72" viewBox="0 0 72 72">
          <rect x="1" y="15" width="46" height="43" rx="6" fill="#a8a8a8" />
          <path d="M50 32l18-13c2-1 4 0 4 2v31c0 2-2 3-4 2L50 42z" fill="#a8a8a8" />
          <path d="M3 71L71 1" stroke="#e85a5a" strokeWidth="4" />
        </svg>
      }
    />
    <ToolItem
      className="ml-[135px] w-[240px]"
      label="Participants"
      up
      upClass="left-[266px]"
      icon={
        <div className="flex items-center gap-[12px] text-[36px] text-[#a8a8a8] ml-[54px]">
          <svg width="73" height="54" viewBox="0 0 73 54">
            <ellipse cx="26" cy="10" rx="12" ry="11" fill="#a8a8a8" />
            <ellipse cx="55" cy="16" rx="12" ry="11" fill="#a8a8a8" />
            <path d="M0 54c0-14 8-28 24-28s24 14 24 28z" fill="#a8a8a8" />
            <path d="M52 54c0-8-1-16-6-21 14-3 27 6 27 21z" fill="#a8a8a8" />
          </svg>
          <span className="-mt-[4px]">31</span>
        </div>
      }
    />
    <ToolItem
      className="ml-[131px] w-[120px]"
      label="Chat"
      up
      upClass="left-[128px]"
      icon={
        <svg width="60" height="56" viewBox="0 0 60 56">
          <path d="M8 0h44a8 8 0 0 1 8 8v28a8 8 0 0 1-8 8H22L12 56l2-12H8a8 8 0 0 1-8-8V8a8 8 0 0 1 8-8z" fill="#a8a8a8" />
        </svg>
      }
    />
    <ToolItem
      className="ml-[76px] w-[260px]"
      label="Share Screen"
      labelClass="text-[#22d95e]"
      icon={
        <div className="w-[71px] h-[54px] rounded-[6px] bg-[#22d95e] flex items-center justify-center">
          <svg width="26" height="32" viewBox="0 0 26 32">
            <path d="M13 30V4M3 14L13 3l10 11" stroke="#16181a" strokeWidth="4" fill="none" />
          </svg>
        </div>
      }
    />
    <ToolItem
      className="ml-[37px] w-[200px]"
      label="Summary"
      icon={
        <svg width="60" height="70" viewBox="0 0 60 70">
          <path d="M10 0h26v20a4 4 0 0 0 4 4h20v36a10 10 0 0 1-10 10H10A10 10 0 0 1 0 60V10A10 10 0 0 1 10 0z" fill="#a8a8a8" />
          <path d="M41 1l19 19H41z" fill="#a8a8a8" />
          <path d="M24 32c2 8 4 10 11 14-7 3-9 6-11 14-2-8-4-11-11-14 7-4 9-6 11-14z" fill="#232426" />
          <path d="M36 26c1 4 2 5 5 7-3 1-4 3-5 7-1-4-2-6-5-7 3-2 4-3 5-7z" fill="#232426" />
        </svg>
      }
    />
    <ToolItem
      className="ml-[37px] w-[270px]"
      label="AI Companion"
      icon={
        <svg width="74" height="72" viewBox="0 0 74 72">
          <path d="M34 6C38 24 47 33 67 38 47 43 38 52 34 71 30 52 21 43 1 38 21 33 30 24 34 6z" fill="#a8a8a8" stroke="#a8a8a8" strokeWidth="3" strokeLinejoin="round" />
          <path d="M60 0c2 7 5 10 12 12-7 2-10 5-12 12-2-7-5-10-12-12 7-2 10-5 12-12z" fill="#a8a8a8" />
        </svg>
      }
    />
    <ToolItem
      className="ml-[44px] w-[280px]"
      label="Show Captions"
      up
      upClass="left-[257px]"
      icon={
        <div className="w-[72px] h-[54px] rounded-[6px] bg-[#a8a8a8] flex items-center justify-center text-[32px] font-bold text-[#232426]">CC</div>
      }
    />
    <ToolItem
      className="ml-[48px] w-[190px]"
      label="Reactions"
      icon={
        <svg width="72" height="72" viewBox="0 0 72 72">
          <path d="M30 12a30 30 0 1 0 30 30c-8 0-12-4-12-12-10 0-18-8-18-18z" fill="#a8a8a8" />
          <circle cx="21" cy="36" r="3.5" fill="#232426" />
          <circle cx="38" cy="36" r="3.5" fill="#232426" />
          <path d="M17 48c5 8 20 8 25 0" stroke="#232426" strokeWidth="4" fill="none" />
          <path d="M59 2v24M47 14h24" stroke="#a8a8a8" strokeWidth="5" />
        </svg>
      }
    />
    <ToolItem
      className="ml-[48px] w-[220px]"
      label="Whiteboard"
      icon={
        <svg width="62" height="50" viewBox="0 0 62 50">
          <path d="M60 28V6a4 4 0 0 0-4-4H6a4 4 0 0 0-4 4v30a4 4 0 0 0 4 4h16" stroke="#a8a8a8" strokeWidth="4" fill="none" />
          <path d="M28 40l8-8h22v14H36z" stroke="#a8a8a8" strokeWidth="4" fill="none" />
        </svg>
      }
    />
    <div className="ml-[74px] mt-[26px] w-[233px] h-[83px] rounded-[18px] bg-[#e22a28] flex items-center justify-center text-[36px] font-bold text-white">Leave</div>
  </div>
);

export default function App() {
  return (
    <div className="relative w-[3200px] h-[2000px] overflow-hidden flex flex-col bg-[#111] font-['Noto_Sans',sans-serif]">
      <TopBar />
      <TitleBar />
      <div className="h-[1701px] shrink-0 flex">
        <div className="w-[90px] shrink-0 bg-[#121212]" />
        <div className="w-[3020px] shrink-0 flex flex-col">
          <WordHeader />
          <Ribbon />
          <Doc />
          <StatusBar />
          <Taskbar />
        </div>
        <div className="flex-1 bg-[#121212]" />
      </div>
      <BottomBar />

      {/* floating zoom overlays */}
      <div className="absolute left-[15px] top-[163px] w-[77px] h-[78px] rounded-[12px] bg-[#0e0e0e] flex items-center justify-center">
        <svg width="40" height="42" viewBox="0 0 40 42">
          <path d="M20 0c6 4 12 6 19 6v14c0 10-8 18-19 22C9 38 1 30 1 20V6c7 0 13-2 19-6z" fill="#22d95e" />
          <path d="M11 21l7 8 12-15" stroke="#111" strokeWidth="3.5" fill="none" />
        </svg>
      </div>
      <div className="absolute left-[108px] top-[157px] w-[326px] h-[90px] rounded-[16px] bg-[#2f2f2f]/77 flex items-center pl-[48px] text-white">
        <div className="mt-[4px] w-[36px] h-[38px] rounded-full bg-[radial-gradient(circle_at_50%_45%,#e85040_45%,#8a6a68_100%)]" />
        <span className="ml-[33px] text-[38px]">Recording</span>
      </div>
      <div className="absolute left-[579px] top-[142px] h-[66px] flex text-[35.4px] whitespace-nowrap">
        <div className="w-[843px] bg-[#22d95e] text-[#111] flex items-center pl-[30px]">You are viewing Bhanupriya Katrapally's screen</div>
        <div className="w-[314px] bg-[#1c1c1e] rounded-br-[10px] text-[#f4f4f4] flex items-center pl-[30px] gap-[14px]">
          View Options
          <svg width="22" height="16" viewBox="0 0 22 16">
            <path d="M2 2l9 11 9-11" stroke="#ddd" strokeWidth="4" fill="none" />
          </svg>
        </div>
      </div>
      <div className="absolute left-[2990px] top-[166px] w-[186px] h-[90px] rounded-[18px] bg-[#1e1e1e] flex items-center pl-[25px] gap-[18px] text-[38px] text-white">
        <svg width="32" height="32" viewBox="0 0 32 32">
          <rect width="9" height="9" rx="2" fill="#ddd" />
          <rect x="11.5" width="9" height="9" rx="2" fill="#ddd" />
          <rect x="23" width="9" height="9" rx="2" fill="#ddd" />
          <rect y="12" width="32" height="20" rx="2" fill="#ddd" />
        </svg>
        View
      </div>
    </div>
  );
}
